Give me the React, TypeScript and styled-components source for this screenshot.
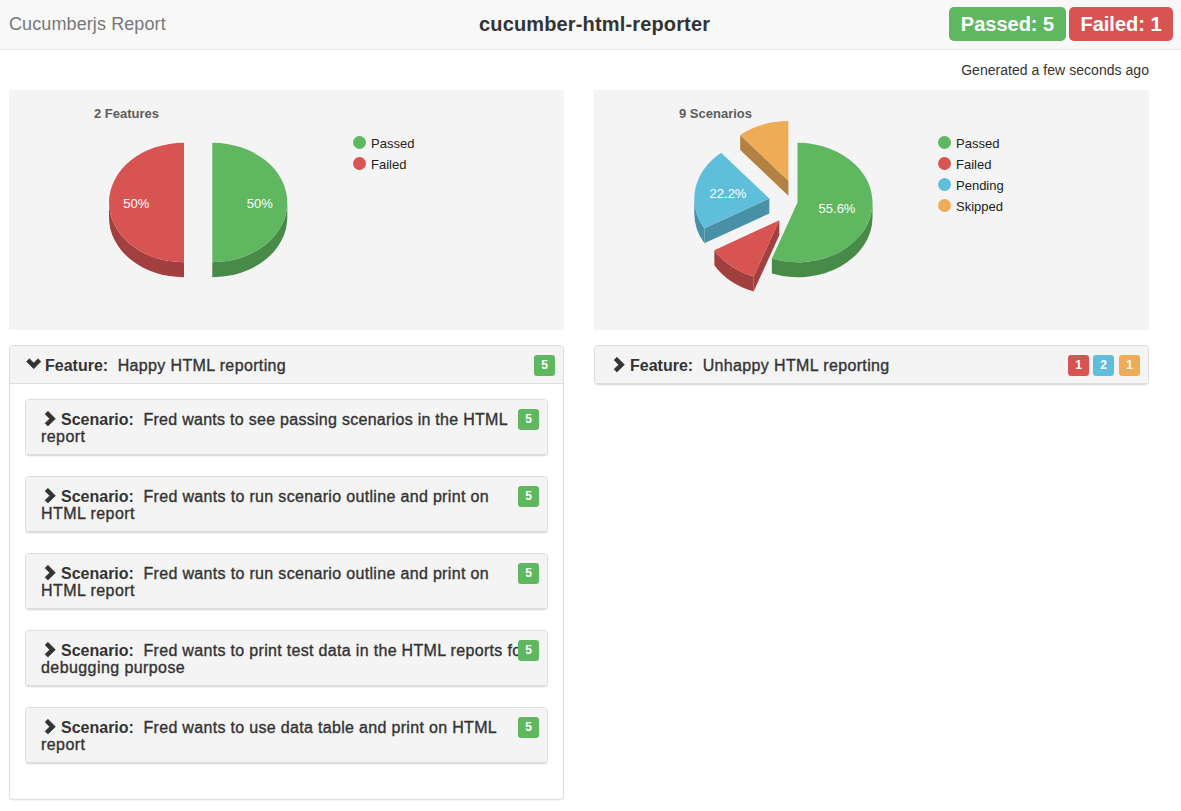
import React from "react";
import styled, { createGlobalStyle } from "styled-components";

const GREEN = "#5fb760";
const RED = "#d75452";
const BLUE = "#5fbfdb";
const ORANGE = "#eeac57";

const GlobalStyle = createGlobalStyle`
  * { box-sizing: border-box; }
  body {
    margin: 0;
    background: #fff;
    color: #333;
    font-family: "Liberation Sans", Arial, sans-serif;
    font-size: 14px;
  }
`;

const Page = styled.div`
  width: 1181px;
  height: 811px;
  overflow: hidden;
`;

const Navbar = styled.header`
  display: grid;
  grid-template-columns: 470px auto 1fr;
  height: 50px;
  padding: 0 8px 0 9px;
  background: #f8f8f8;
  border-bottom: 1px solid #e7e7e7;
`;

const Brand = styled.div`
  font-size: 18px;
  line-height: 49px;
  color: #777;
  white-space: nowrap;
  letter-spacing: 0.1px;
`;

const Title = styled.h1`
  margin: 0;
  font-size: 20px;
  font-weight: 700;
  line-height: 49px;
  letter-spacing: 0.15px;
  white-space: nowrap;
`;

const Totals = styled.div`
  display: flex;
  justify-content: flex-end;
  gap: 3px;
  padding-top: 7px;
`;

const Total = styled.span<{ $color: string; $width: number }>`
  width: ${(p) => p.$width}px;
  height: 34px;
  border-radius: 5px;
  background: ${(p) => p.$color};
  color: #fff;
  font-size: 20px;
  font-weight: 700;
  line-height: 34px;
  text-align: center;
  white-space: nowrap;
`;

const Generated = styled.div`
  height: 40px;
  padding-right: 32px;
  line-height: 41px;
  letter-spacing: 0.04px;
  text-align: right;
`;

const Columns = styled.main`
  display: grid;
  grid-template-columns: 555px 555px;
  column-gap: 30px;
  align-items: start;
  padding-left: 9px;
`;

const Column = styled.section`
  display: flex;
  flex-direction: column;
  gap: 15px;
`;

const ChartCard = styled.div`
  display: grid;
  grid-template-columns: 344px 1fr;
  height: 240px;
  background: #f4f4f4;
`;

const ChartTitle = styled.div`
  height: 30px;
  padding: 16px 0 0 85px;
  font-size: 13px;
  font-weight: 700;
  line-height: 15px;
  color: #5c5c5c;
`;

const PieCanvas = styled.svg`
  display: block;
  font-size: 13px;
`;

const Legend = styled.ul`
  margin: 0;
  padding: 43px 0 0;
  list-style: none;
  font-size: 13px;
  color: #222;
`;

const LegendItem = styled.li<{ $color: string }>`
  display: flex;
  align-items: center;
  gap: 5px;
  height: 21px;
  &::before {
    content: "";
    width: 13px;
    height: 13px;
    margin-top: -3px;
    border-radius: 50%;
    background: ${(p) => p.$color};
  }
`;

const Panel = styled.article`
  border: 1px solid #ddd;
  border-radius: 4px;
  background: #fff;
  box-shadow: 0 1px 1px rgba(0, 0, 0, 0.05);
`;

const PanelHeading = styled.div`
  position: relative;
  padding: 11px 15px 9px;
  border-bottom: 1px solid #ddd;
  border-radius: 3px 3px 0 0;
  background: #f4f4f4;
  font-size: 16px;
  line-height: 17px;
`;

const PanelBody = styled.div`
  padding: 15px;
`;

const ScenarioPanel = styled(Panel)`
  margin-bottom: 20px;
`;

const Line = styled.div<{ $spacing: number }>`
  display: flex;
  align-items: center;
  height: 17px;
  white-space: pre;
  letter-spacing: ${(p) => p.$spacing}px;
  -webkit-text-stroke: 0.35px #333;
`;

const Kind = styled.b`
  margin: 0 9.5px 0 1px;
  letter-spacing: 0;
  -webkit-text-stroke: 0;
`;

const Badges = styled.div`
  position: absolute;
  top: 9px;
  right: 8px;
  display: flex;
  gap: 4px;
`;

const Badge = styled.span<{ $color: string }>`
  width: 21px;
  height: 21px;
  border-radius: 3px;
  background: ${(p) => p.$color};
  color: #fff;
  font-size: 12px;
  font-weight: 700;
  line-height: 20px;
  text-align: center;
  &:nth-child(3) {
    margin-left: 1px;
  }
`;

const Chevron = styled.svg`
  flex: none;
  display: block;
  margin-top: -2px;
  fill: #333;
  stroke: #333;
  stroke-width: 0.6px;
  stroke-linejoin: round;
`;

function ChevronDown() {
  return (
    <Chevron width="19" height="17" viewBox="0 0 19 17">
      <path d="M8.7 12.7 1.5 5.5 4.4 2.7 8.7 7 13 2.7 15.9 5.5Z" />
    </Chevron>
  );
}

function ChevronRight() {
  return (
    <Chevron width="19" height="17" viewBox="0 0 19 17">
      <path d="M14.4 8.7 6.9 16.1 4.1 13.3 8.7 8.7 4.1 4.1 6.9 1.3Z" />
    </Chevron>
  );
}

interface SliceData {
  x: number;
  y: number;
  from: number;
  to: number;
  color: string;
  side: string;
  label?: string;
  labelX?: number;
  labelY?: number;
}

const RX = 75;
const RY = 59.7;
const DEPTH = 15;

function Slice({ s }: { s: SliceData }) {
  const at = (deg: number) => {
    const r = (deg * Math.PI) / 180;
    return [s.x + RX * Math.sin(r), s.y - RY * Math.cos(r)];
  };
  const [ax, ay] = at(s.from);
  const [bx, by] = at(s.to);
  const large = s.to - s.from > 180 ? 1 : 0;
  const wall = (x1: number, y1: number, x2: number, y2: number) =>
    `M${x1} ${y1}L${x2} ${y2}V${y2 + DEPTH}L${x1} ${y1 + DEPTH}Z`;
  const from = Math.max(s.from, 90);
  const to = Math.min(s.to, 270);
  const walls: string[] = [];
  if (from < to) {
    const [cx, cy] = at(from);
    const [dx, dy] = at(to);
    walls.push(
      `M${cx} ${cy}A${RX} ${RY} 0 0 1 ${dx} ${dy}V${dy + DEPTH}A${RX} ${RY} 0 0 0 ${cx} ${cy + DEPTH}Z`
    );
  }
  if (s.from > 180) walls.push(wall(s.x, s.y, ax, ay));
  return (
    <g>
      {walls.map((d) => (
        <path key={d} d={d} fill={s.side} />
      ))}
      <path
        d={`M${s.x} ${s.y}L${ax} ${ay}A${RX} ${RY} 0 ${large} 1 ${bx} ${by}Z`}
        fill={s.color}
      />
      {s.label && (
        <text x={s.labelX} y={s.labelY} fill="#fff" textAnchor="middle">
          {s.label}
        </text>
      )}
    </g>
  );
}

const GREEN_SIDE = "#488a48";
const RED_SIDE = "#a1403e";
const BLUE_SIDE = "#4890a6";
const ORANGE_SIDE = "#b38141";

const featureSlices: SliceData[] = [
  { x: 175, y: 82.5, from: 180, to: 360, color: RED, side: RED_SIDE, label: "50%", labelX: 127.2, labelY: 88 },
  { x: 203.3, y: 82.5, from: 0, to: 180, color: GREEN, side: GREEN_SIDE, label: "50%", labelX: 250.7, labelY: 88 },
];

const scenarioSlices: SliceData[] = [
  { x: 194.4, y: 60.7, from: 320, to: 360, color: ORANGE, side: ORANGE_SIDE },
  { x: 175.3, y: 78.5, from: 240, to: 320, color: BLUE, side: BLUE_SIDE, label: "22.2%", labelX: 134, labelY: 78 },
  { x: 203.5, y: 82.5, from: 0, to: 200, color: GREEN, side: GREEN_SIDE, label: "55.6%", labelX: 243, labelY: 93 },
  { x: 185.3, y: 100.3, from: 200, to: 240, color: RED, side: RED_SIDE },
];

interface ChartProps {
  title: string;
  slices: SliceData[];
  legend: [string, string][];
}

function Chart({ title, slices, legend }: ChartProps) {
  return (
    <ChartCard>
      <div>
        <ChartTitle>{title}</ChartTitle>
        <PieCanvas width="344" height="210" viewBox="0 0 344 210">
          {slices.map((s) => (
            <Slice key={s.color} s={s} />
          ))}
        </PieCanvas>
      </div>
      <Legend>
        {legend.map(([name, color]) => (
          <LegendItem key={name} $color={color}>
            {name}
          </LegendItem>
        ))}
      </Legend>
    </ChartCard>
  );
}

const scenarios = [
  { first: "Fred wants to see passing scenarios in the HTML", second: "report", spacing: 0.28 },
  { first: "Fred wants to run scenario outline and print on", second: "HTML report", spacing: 0.33 },
  { first: "Fred wants to run scenario outline and print on", second: "HTML report", spacing: 0.33 },
  { first: "Fred wants to print test data in the HTML reports for", second: "debugging purpose", spacing: 0.32 },
  { first: "Fred wants to use data table and print on HTML", second: "report", spacing: 0.32 },
];

export default function App() {
  return (
    <Page>
      <GlobalStyle />
      <Navbar>
        <Brand>Cucumberjs Report</Brand>
        <Title>cucumber-html-reporter</Title>
        <Totals>
          <Total $color={GREEN} $width={117}>Passed: 5</Total>
          <Total $color={RED} $width={104}>Failed: 1</Total>
        </Totals>
      </Navbar>
      <Generated>Generated a few seconds ago</Generated>
      <Columns>
        <Column>
          <Chart
            title="2 Features"
            slices={featureSlices}
            legend={[["Passed", GREEN], ["Failed", RED]]}
          />
          <Panel>
            <PanelHeading>
              <Line $spacing={0.36}>
                <ChevronDown />
                <Kind>Feature:</Kind>
                Happy HTML reporting
              </Line>
              <Badges>
                <Badge $color={GREEN}>5</Badge>
              </Badges>
            </PanelHeading>
            <PanelBody>
              {scenarios.map((s, i) => (
                <ScenarioPanel key={i}>
                  <PanelHeading>
                    <Line $spacing={s.spacing}>
                      <ChevronRight />
                      <Kind>Scenario:</Kind>
                      {s.first}
                    </Line>
                    <Line $spacing={0.42}>{s.second}</Line>
                    <Badges>
                      <Badge $color={GREEN}>5</Badge>
                    </Badges>
                  </PanelHeading>
                </ScenarioPanel>
              ))}
            </PanelBody>
          </Panel>
        </Column>
        <Column>
          <Chart
            title="9 Scenarios"
            slices={scenarioSlices}
            legend={[["Passed", GREEN], ["Failed", RED], ["Pending", BLUE], ["Skipped", ORANGE]]}
          />
          <Panel>
            <PanelHeading>
              <Line $spacing={0.36}>
                <ChevronRight />
                <Kind>Feature:</Kind>
                Unhappy HTML reporting
              </Line>
              <Badges>
                <Badge $color={RED}>1</Badge>
                <Badge $color={BLUE}>2</Badge>
                <Badge $color={ORANGE}>1</Badge>
              </Badges>
            </PanelHeading>
          </Panel>
        </Column>
      </Columns>
    </Page>
  );
}
